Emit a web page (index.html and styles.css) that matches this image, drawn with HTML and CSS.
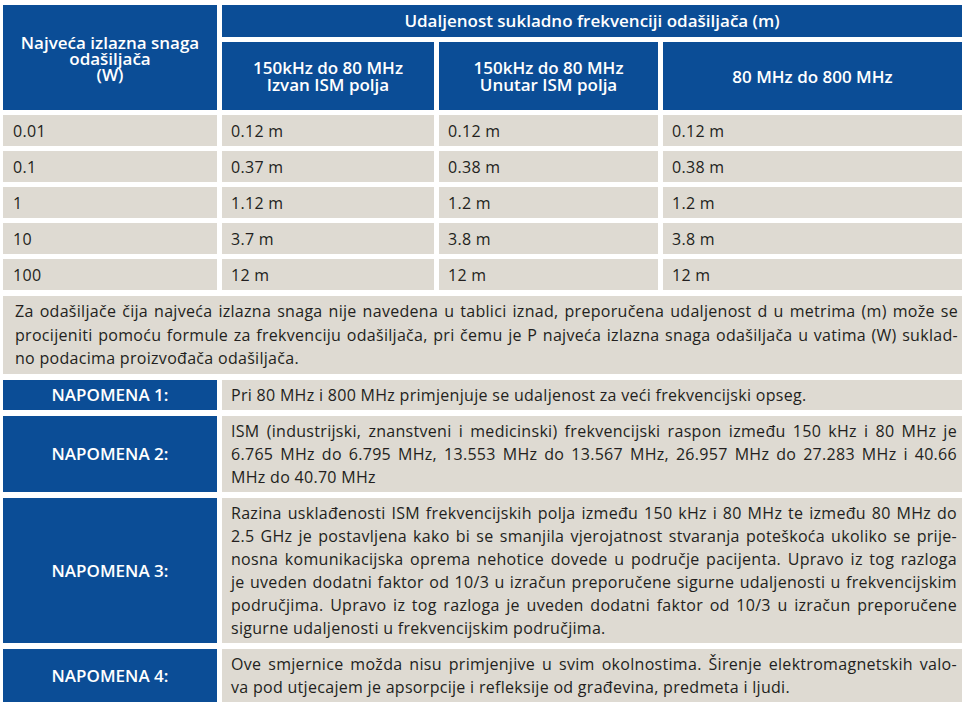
FILE: index.html
```html
<!DOCTYPE html>
<html lang="hr">
<head>
<meta charset="utf-8">
<title>Udaljenost sukladno frekvenciji odašiljača</title>
<link rel="stylesheet" href="styles.css">
</head>
<body>
<div class="sheet">
  <div class="dist">
    <div class="hcell h-power">Najveća izlazna snaga<br>odašiljača<br>(W)</div>
    <div class="hcell h-group">Udaljenost sukladno frekvenciji odašiljača (m)</div>
    <div class="hcell h-sub">150kHz do 80 MHz<br>Izvan ISM polja</div>
    <div class="hcell h-sub">150kHz do 80 MHz<br>Unutar ISM polja</div>
    <div class="hcell h-sub">80 MHz do 800 MHz</div>

    <div class="cell first">0.01</div><div class="cell">0.12 m</div><div class="cell">0.12 m</div><div class="cell">0.12 m</div>
    <div class="cell first">0.1</div><div class="cell">0.37 m</div><div class="cell">0.38 m</div><div class="cell">0.38 m</div>
    <div class="cell first">1</div><div class="cell">1.12 m</div><div class="cell">1.2 m</div><div class="cell">1.2 m</div>
    <div class="cell first">10</div><div class="cell">3.7 m</div><div class="cell">3.8 m</div><div class="cell">3.8 m</div>
    <div class="cell first">100</div><div class="cell">12 m</div><div class="cell">12 m</div><div class="cell">12 m</div>
  </div>

  <div class="notes">
    <div class="note-text wide">
      <span class="ln">Za odašiljače čija najveća izlazna snaga nije navedena u tablici iznad, preporučena udaljenost d u metrima (m) može se</span>
      <span class="ln">procijeniti pomoću formule za frekvenciju odašiljača, pri čemu je P najveća izlazna snaga odašiljača u vatima (W) suklad-</span>
      <span class="ln last">no podacima proizvođača odašiljača.</span>
    </div>

    <div class="note-label">NAPOMENA 1:</div>
    <div class="note-text">
      <span class="ln last">Pri 80 MHz i 800 MHz primjenjuje se udaljenost za veći frekvencijski opseg.</span>
    </div>

    <div class="note-label">NAPOMENA 2:</div>
    <div class="note-text">
      <span class="ln">ISM (industrijski, znanstveni i medicinski) frekvencijski raspon između 150 kHz i 80 MHz je</span>
      <span class="ln">6.765 MHz do 6.795 MHz, 13.553 MHz do 13.567 MHz, 26.957 MHz do 27.283 MHz i 40.66</span>
      <span class="ln last">MHz do 40.70 MHz</span>
    </div>

    <div class="note-label">NAPOMENA 3:</div>
    <div class="note-text">
      <span class="ln">Razina usklađenosti ISM frekvencijskih polja između 150 kHz i 80 MHz te između 80 MHz do</span>
      <span class="ln">2.5 GHz je postavljena kako bi se smanjila vjerojatnost stvaranja poteškoća ukoliko se prije-</span>
      <span class="ln">nosna komunikacijska oprema nehotice dovede u područje pacijenta. Upravo iz tog razloga</span>
      <span class="ln">je uveden dodatni faktor od 10/3 u izračun preporučene sigurne udaljenosti u frekvencijskim</span>
      <span class="ln">područjima. Upravo iz tog razloga je uveden dodatni faktor od 10/3 u izračun preporučene</span>
      <span class="ln last">sigurne udaljenosti u frekvencijskim područjima.</span>
    </div>

    <div class="note-label">NAPOMENA 4:</div>
    <div class="note-text">
      <span class="ln">Ove smjernice možda nisu primjenjive u svim okolnostima. Širenje elektromagnetskih valo-</span>
      <span class="ln last">va pod utjecajem je apsorpcije i refleksije od građevina, predmeta i ljudi.</span>
    </div>
  </div>
</div>
</body>
</html>
```

FILE: styles.css
```css
html, body {
  margin: 0;
  background: #ffffff;
}

body {
  padding: 5px 5px 0 3px;
  font-family: "Open Sans", Lato, "Liberation Sans", sans-serif;
  font-size: 16px;
  letter-spacing: 0.3px;
  color: #231f20;
}

.sheet {
  width: 959px;
}

.dist {
  display: grid;
  grid-template-columns: 214px 212px 219px 299px;
  grid-template-rows: 32px 68px repeat(5, 31px);
  gap: 5px;
}

.hcell {
  background: #0b4d96;
  color: #ffffff;
  font-weight: 600;
  display: flex;
  align-items: center;
  justify-content: center;
  text-align: center;
  font-size: 17px;
  letter-spacing: 0;
}

.h-power {
  grid-row: 1 / 3;
  line-height: 16px;
  padding-top: 2px;
}

.h-group {
  grid-column: 2 / 5;
  padding-bottom: 1px;
}

.h-sub {
  line-height: 17px;
}

.cell {
  background: #dedad2;
  display: flex;
  align-items: center;
  padding-left: 9px;
}

.cell.first {
  padding-left: 10px;
}

.notes {
  display: grid;
  grid-template-columns: 214px 1fr;
  gap: 6px 5px;
  margin-top: 6px;
}

.note-label {
  background: #0b4d96;
  color: #ffffff;
  font-weight: 600;
  font-size: 17px;
  letter-spacing: 0;
  display: flex;
  align-items: center;
  justify-content: center;
}

.note-text {
  background: #dedad2;
  padding: 4px 5px 3px 9px;
  line-height: 23px;
}

.note-text.wide {
  grid-column: 1 / -1;
  padding-left: 12px;
  padding-right: 4px;
  line-height: 23.5px;
}

.ln {
  display: block;
  text-align: justify;
  text-align-last: justify;
}

.ln.last {
  text-align-last: left;
}
```
